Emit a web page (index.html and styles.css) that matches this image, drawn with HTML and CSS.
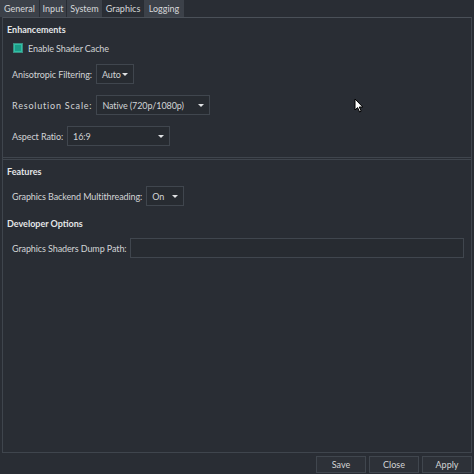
FILE: index.html
```html
<!DOCTYPE html>
<html>
<head>
<meta charset="utf-8">
<link rel="stylesheet" href="styles.css">
</head>
<body>
<div class="window">
  <div class="tabs">
    <div class="tab t-general">General</div>
    <div class="tab t-input">Input</div>
    <div class="tab t-system">System</div>
    <div class="tab t-graphics active">Graphics</div>
    <div class="tab t-logging">Logging</div>
  </div>
  <div class="pane">
    <div class="group enh">
      <div class="title">Enhancements</div>
      <div class="row check-row"><span class="check"></span><span>Enable Shader Cache</span></div>
      <div class="row r-aniso"><span class="label">Anisotropic Filtering:</span><div class="combo w-aniso"><span>Auto</span><span class="arrow"></span></div></div>
      <div class="row r-res"><span class="label l-res">Resolution Scale:</span><div class="combo w-res"><span>Native (720p/1080p)</span><span class="arrow"></span></div></div>
      <div class="row r-asp"><span class="label">Aspect Ratio:</span><div class="combo w-asp"><span>16:9</span><span class="arrow"></span></div></div>
    </div>
    <div class="group feat">
      <div class="title">Features</div>
      <div class="row r-mt"><span class="label">Graphics Backend Multithreading:</span><div class="combo w-mt"><span>On</span><span class="arrow"></span></div></div>
    </div>
    <div class="group dev">
      <div class="title">Developer Options</div>
      <div class="row r-dump"><span class="label">Graphics Shaders Dump Path:</span><div class="input"></div></div>
    </div>
  </div>
  <div class="buttons">
    <div class="btn">Save</div>
    <div class="btn">Close</div>
    <div class="btn">Apply</div>
  </div>
  <svg class="cursor" width="10" height="16" viewBox="0 0 10 16"><path d="M1 1 L1 12 L3.6 9.6 L5.6 14 L7.2 13.2 L5.3 9 L8.8 9 Z" fill="#ffffff" stroke="#000000" stroke-width="1" stroke-linejoin="round"/></svg>
</div>
</body>
</html>
```
FILE: styles.css
```css
html, body {
  margin: 0;
  padding: 0;
  background: #292d34;
}
body {
  font-family: Lato, "Noto Sans", sans-serif;
  font-size: 9px;
  color: #d2d4d6;
}
.window {
  position: relative;
  width: 474px;
  height: 474px;
  overflow: hidden;
}
.tabs {
  display: flex;
  height: 17px;
  gap: 1px;
}
.tab {
  background: #3c4149;
  line-height: 17px;
  height: 17px;
  text-align: center;
  color: #d6d8da;
}
.t-general { width: 39px; }
.t-input { width: 26px; }
.t-system { width: 35px; }
.t-graphics { width: 40px; }
.t-logging { width: 40px; }
.tab.active {
  background: #2a2e35;
}
.pane {
  margin: 0 2px 0 2px;
  height: 436px;
  border: 1px solid #3f454d;
  border-top-color: #4a5058;
  box-sizing: border-box;
  display: flex;
  flex-direction: column;
}
.group {
  padding: 0 4px;
}
.title {
  font-weight: bold;
  color: #e4e6e8;
  height: 12px;
  line-height: 12px;
}
.enh {
  height: 140px;
  border-bottom: 1px solid #3f454d;
  padding-top: 6px;
  box-sizing: border-box;
}
.feat {
  border-top: 1px solid #3f454d;
  padding-top: 6px;
  margin-top: 1px;
  box-sizing: border-box;
  height: 59px;
}
.row {
  display: flex;
  align-items: center;
  padding-left: 5px;
  letter-spacing: -0.1px;
}
.check-row {
  margin-top: 6px;
  height: 12px;
}
.check {
  width: 8px;
  height: 8px;
  background: #1a9c87;
  border: 1px solid #3b8d80;
  box-shadow: inset 0 0 0 1px #2fbfa5;
  margin-right: 5px;
  margin-left: 1px;
}
.label {
  margin-right: 4px;
}
.l-res {
  letter-spacing: 0.8px;
}
.combo {
  height: 20px;
  box-sizing: border-box;
  border: 1px solid #40464e;
  background: #272b31;
  display: flex;
  align-items: center;
  justify-content: space-between;
  padding: 0 5px 0 5px;
}
.arrow {
  width: 0;
  height: 0;
  border-left: 3px solid transparent;
  border-right: 3px solid transparent;
  border-top: 3px solid #e0e2e4;
}
.r-aniso { margin-top: 10px; }
.w-aniso { width: 38px; }
.r-res { margin-top: 11px; }
.w-res { width: 114px; }
.r-asp { margin-top: 11px; }
.w-asp { width: 103px; }
.r-mt { margin-top: 8px; }
.w-mt { width: 38px; }
.r-dump { margin-top: 8px; }
.input {
  flex: 1;
  height: 20px;
  box-sizing: border-box;
  border: 1px solid #40464e;
  background: #272b31;
  margin-right: 3px;
}
.buttons {
  display: flex;
  justify-content: flex-end;
  gap: 3px;
  padding: 3px 2px 0 0;
}
.btn {
  width: 50px;
  height: 17px;
  box-sizing: border-box;
  border: 1px solid #40464e;
  background: #2d3138;
  text-align: center;
  line-height: 15px;
}
.cursor {
  position: absolute;
  left: 354px;
  top: 98px;
}
```
